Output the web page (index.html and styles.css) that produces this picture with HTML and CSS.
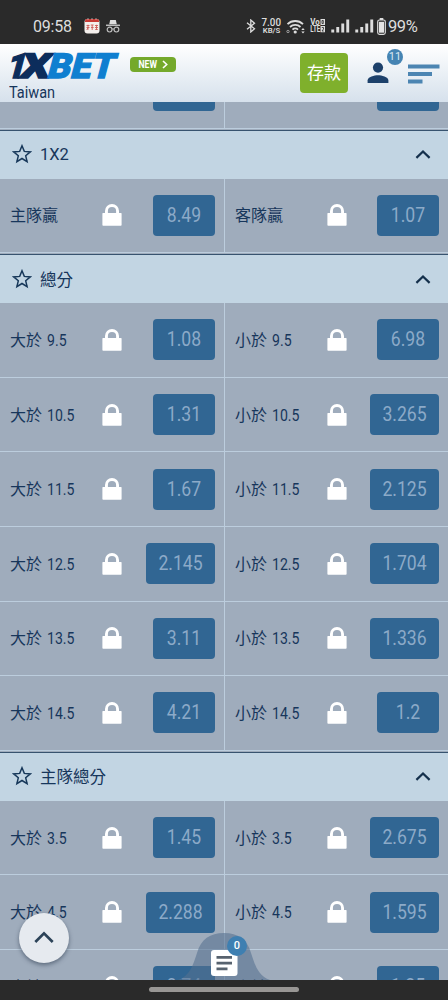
FILE: index.html
```html
<!DOCTYPE html>
<html lang="zh-Hant">
<head>
<meta charset="utf-8">
<title>1XBET</title>
<link rel="stylesheet" href="styles.css">
</head>
<body>
<svg class="defs" width="0" height="0">
  <symbol id="lock" viewBox="0 0 20 22"><path d="M3 9V7a7 7 0 0 1 14 0v2H19a.6.6 0 0 1 .6.6v11.400a.8.8 0 0 1-.8.8H1.200a.8.8 0 0 1-.8-.8V9.600A.6.6 0 0 1 1 9zM5.900 9h8.200V7a4.100 4.100 0 0 0-8.200 0z" fill="#fff" fill-rule="evenodd"/></symbol>
  <symbol id="star" viewBox="0 0 20 20"><path d="M10 1.800l2.300 5.600 6 .5-4.600 3.900 1.400 5.900-5.100-3.200-5.100 3.200 1.400-5.900-4.600-3.900 6-.5z" fill="none" stroke="#17385a" stroke-width="1.500"/></symbol>
  <symbol id="up" viewBox="0 0 16 10"><path d="M1.400 8.900L8 2.500l6.600 6.400" fill="none" stroke="#14304c" stroke-width="2.200"/></symbol>
  <symbol id="signal" viewBox="0 0 19 14"><path d="M.3 10.500h2.900v3H.300zM5.300 8h2.900v5.500H5.300zM10.300 4.500h2.900v9h-2.900zM15.300 .5h2.900v13h-2.900z" fill="#ddd"/></symbol>
</svg>
<div class="screen">
  <div class="status">
    <span class="clock">09:58</span>
    <svg class="cal" width="16" height="16" viewBox="0 0 16 16"><rect x=".5" y="1" width="15" height="14.500" rx="3" fill="#f4efec"/><path d="M1 4V3a2 2 0 0 1 2-2h10a2 2 0 0 1 2 2v1z" fill="#c83a34"/><path d="M4 0v2M8 0v2M12 0v2" stroke="#eee" stroke-width=".6"/><path d="M2.500 7.500h3M4 6.800v5M2.500 9.500h3M2.800 12l1-2M6.800 7h2.800M8.200 7v5M7 9.500h2.600M11 7.500h3M12.500 6.800v5M11 9.500h3M11.200 11.500h2.600" stroke="#cf5c58" stroke-width=".9"/></svg>
    <svg class="incog" width="14" height="14" viewBox="0 0 14 14" fill="none" stroke="#bbb"><path d="M3.200 5.200L4.200 1h5.600l1 4.200z" fill="#ddd" stroke="none"/><path d="M0 6.300h14" stroke-width="1.500"/><circle cx="3.600" cy="10.600" r="2.400" stroke-width="1.200"/><circle cx="10.400" cy="10.600" r="2.400" stroke-width="1.200"/><path d="M6 10.200q1-.8 2 0"/></svg>
    <svg class="bt" width="10" height="14" viewBox="0 0 10 14"><path d="M1 3.800l7.500 6L4.800 13V1l3.700 3.200-7.500 6" fill="none" stroke="#ddd" stroke-width="1.300"/></svg>
    <svg class="speed" width="21" height="18" viewBox="0 0 21 18" fill="#ddd"><text x=".5" y="8.700" font-size="10.500" font-weight="500" textLength="19.500" lengthAdjust="spacingAndGlyphs">7.00</text><text x="1.800" y="16.300" font-size="8" font-weight="600" textLength="17.500" lengthAdjust="spacingAndGlyphs">KB/S</text></svg>
    <svg class="wifi" width="20" height="15" viewBox="0 0 20 15"><g fill="none" stroke="#ddd" stroke-width="1.800"><path d="M1.500 5.200a11 11 0 0 1 15.500 0M4 8a7.400 7.400 0 0 1 10.500 0M6.500 10.600a4 4 0 0 1 5.500 0"/></g><circle cx="9.200" cy="13" r="1.600" fill="#ddd"/><circle cx="2" cy="12.500" r="1.200" fill="none" stroke="#aaa" stroke-width=".9"/><path d="M15.300 11l1.700-2 1.700 2zM15.300 12.500l1.700 2 1.700-2z" fill="#ddd"/></svg>
    <svg class="volte" width="16" height="16" viewBox="0 0 16 16" fill="#ddd" font-weight="700"><text x=".3" y="7.200" font-size="8.500" textLength="9.500" lengthAdjust="spacingAndGlyphs">Vo</text><text x=".3" y="14.200" font-size="8.500" textLength="10" lengthAdjust="spacingAndGlyphs">LTE</text><path d="M10.500 1h4.500v6h-4.500zM10.500 8h4.500v6.300h-4.500z"/><path d="M12 2.500h1.300v3H12zM11.800 9.500h1.700v1.500l-1.500 2h1.700" fill="none" stroke="#2a2a2a" stroke-width=".8"/></svg>
    <svg class="sig1" width="19" height="14"><use href="#signal"/></svg>
    <svg class="sig2" width="19" height="14"><use href="#signal"/></svg>
    <svg class="bat" width="9" height="17" viewBox="0 0 9 17"><path d="M2.700 0h3.600v2H2.700z" fill="#ddd"/><rect x=".7" y="2" width="7.600" height="14.300" rx="1.800" fill="none" stroke="#ddd" stroke-width="1.200"/><rect x="2" y="3.800" width="5" height="10.900" fill="#e4e4e4"/></svg>
    <span class="pct">99%</span>
  </div>
  <header class="top">
    <div class="brand">
      <svg class="logo" width="114" height="30" viewBox="0 0 114 30"><g font-family="Roboto, sans-serif" font-weight="900" font-size="34.500" transform="translate(0 26) skewX(-15)" stroke-width="1.300"><g fill="#0c2d5c" stroke="#0c2d5c"><text x="-3" y="0" textLength="19" lengthAdjust="spacingAndGlyphs">1</text><text x="10.500" y="0" textLength="29.500" lengthAdjust="spacingAndGlyphs">X</text></g><text x="38" y="0" textLength="66.500" lengthAdjust="spacingAndGlyphs" fill="#0f7fd0" stroke="#0f7fd0">BET</text></g></svg>
      <span class="country">Taiwan</span>
    </div>
    <div class="new"><span>NEW</span><svg width="6" height="9" viewBox="0 0 6 9"><path d="M1 1l3.700 3.500L1 8" fill="none" stroke="#fff" stroke-width="1.600"/></svg></div>
    <div class="deposit">存款</div>
    <div class="user"><svg width="22" height="22" viewBox="0 0 22 22" fill="#1d416b"><circle cx="11" cy="5.600" r="5.100"/><path d="M.6 21v-2.600c0-3.400 6.900-5.100 10.400-5.100s10.400 1.700 10.400 5.100V21z"/></svg><span class="count">11</span></div>
    <svg class="menu" width="32" height="20" viewBox="0 0 32 20" fill="#4c85b2"><path d="M0 .5h31.500v4H0zM0 8h24v4H0zM0 15.500h14.500v4H0z"/></svg>
  </header>
  <main class="view">
    <div class="odds" id="odds"></div>
    <div class="coupon">
      <svg width="92" height="47" viewBox="0 0 92 47"><path d="M0 47C12 43 15 32 19 20 23 6 32 0 46 0s23 6 27 20c4 12 7 23 19 27z" fill="#54708f" fill-opacity=".58"/><rect x="33" y="17" width="26.500" height="26" rx="3" fill="#fff"/><path d="M38.500 24.300H54M38.500 30.100H54M38.500 35.900h11" stroke="#57626e" stroke-width="2.800"/></svg>
      <span class="zero">0</span>
    </div>
    <div class="fab"><svg width="20" height="13" viewBox="0 0 20 13"><path d="M1.300 11L10 2.300l8.700 8.700" fill="none" stroke="#2c4358" stroke-width="2.700"/></svg></div>
  </main>
  <div class="nav"><div class="pill"></div></div>
</div>
<script src="odds.js"></script>
</body>
</html>
```

FILE: styles.css
```css
body { margin: 0; background: #2a2a2a; font-family: Roboto, "Noto Sans CJK TC", sans-serif; color: #17365b; }
.defs { position: absolute; }
.screen { width: 448px; height: 1000px; display: flex; flex-direction: column; overflow: hidden; }
svg { display: block; flex: none; }

.status { height: 44px; flex: none; background: #2a2a2a; color: #ddd; display: flex; align-items: center; padding-top: 8px; box-sizing: border-box; }
.clock { width: 39px; margin-left: 33px; font-size: 16px; letter-spacing: -.2px; }
.cal { margin-left: 12px; }
.incog { margin-left: 6px; }
.bt { margin-left: 126px; }
.speed { margin-left: 5px; }
.wifi { margin-left: 4px; }
.volte { margin-left: 4px; }
.sig1 { margin-left: 5px; }
.sig2 { margin-left: 5px; }
.bat { margin-left: 3px; }
.pct { margin-left: 2px; font-size: 16.500px; letter-spacing: -.4px; }

.top { height: 57.500px; flex: none; display: flex; align-items: flex-start; background: linear-gradient(#fff, #d6e1ec); box-sizing: border-box; position: relative; z-index: 1; }
.brand { width: 112px; margin: 8px 0 0 8px; }
.logo { overflow: visible; }
.country { display: block; font-size: 16.500px; line-height: 20px; margin: .5px 0 0 1px; transform: scaleX(.88); transform-origin: left; }
.new { width: 46px; height: 15px; margin: 12.500px 0 0 9.500px; border-radius: 4px; background: #74a92b; color: #fff; display: flex; align-items: center; justify-content: center; gap: 4px; font-size: 10px; font-weight: 700; }
.new span { transform: scaleX(.86); }
.deposit { width: 48px; height: 40px; margin: 9px 0 0 124.500px; border-radius: 4px; background: #7fb02c; color: #fff; font-size: 17px; line-height: 40px; text-align: center; }
.user { width: 22px; margin: 17.500px 0 0 19px; position: relative; }
.count { position: absolute; left: 20px; top: -12.500px; width: 16px; height: 16px; border-radius: 50%; background: #4584b3; color: #dbe9f4; font-size: 11px; line-height: 16px; text-align: center; }
.menu { margin: 19.500px 0 0 18.500px; }

.view { flex: 1; min-height: 0; overflow: hidden; position: relative; background: #9facbc; }
.odds { margin-top: -47.500px; }
.title { height: 50px; box-sizing: border-box; display: flex; align-items: center; padding: 1px 17px 0 12px; background: linear-gradient(#9facbc 1px, #37536f 1px, #37536f 2px, #c2d5e3 2px); font-size: 16.500px; }
.title span { margin-left: 8px; flex: 1; }
.row { height: 74.600px; box-sizing: border-box; display: grid; grid-template-columns: 225px 223px; border-bottom: 1px solid #bccddd; }
.cell { display: flex; align-items: center; padding: 0 9px 0 10px; font-size: 16px; }
.cell:first-child { border-right: 1px solid #bccddd; }
.cell:last-child .name { width: 91.500px; }
.name { width: 92px; white-space: nowrap; display: flex; align-items: baseline; gap: 4.500px; padding-bottom: 2px; }
.num { transform: scaleX(.88); transform-origin: left; }
.price { height: 41px; width: 62px; margin-left: auto; border-radius: 4px; background: #316693; color: #8caac8; font-size: 20px; line-height: 41px; text-align: center; }
.price.wide { width: 69px; }
.price span { display: block; transform: translateY(.4px) scaleX(.88); }

.fab { position: absolute; left: 18.500px; top: 811px; width: 50px; height: 50px; border-radius: 50%; background: #e6eaef; box-shadow: 0 2px 4px rgba(40,55,75,.55); display: flex; align-items: center; justify-content: center; }
.coupon { position: absolute; left: 178px; bottom: 0; }
.zero { position: absolute; left: 49px; top: 3px; width: 20px; height: 20px; border-radius: 50%; background: #3e7fb1; color: #fff; font-size: 11px; font-weight: 500; line-height: 20px; text-align: center; }
.nav { height: 20px; flex: none; background: #2a2a2a; }
.pill { width: 150px; height: 5px; margin: 6.500px auto 0; border-radius: 3px; background: #989694; }
```

FILE: odds.js
```javascript
const sections = [
  { rows: [["", "", "", "", "", ""]] },
  { title: "1X2", rows: [["主隊贏", "", "8.49", "客隊贏", "", "1.07"]] },
  { title: "總分", rows: [
    ["大於", "9.5", "1.08", "小於", "9.5", "6.98"],
    ["大於", "10.5", "1.31", "小於", "10.5", "3.265"],
    ["大於", "11.5", "1.67", "小於", "11.5", "2.125"],
    ["大於", "12.5", "2.145", "小於", "12.5", "1.704"],
    ["大於", "13.5", "3.11", "小於", "13.5", "1.336"],
    ["大於", "14.5", "4.21", "小於", "14.5", "1.2"]
  ] },
  { title: "主隊總分", rows: [
    ["大於", "3.5", "1.45", "小於", "3.5", "2.675"],
    ["大於", "4.5", "2.288", "小於", "4.5", "1.595"],
    ["大於", "5.5", "3.74", "小於", "5.5", "1.25"]
  ] }
];

const cell = (name, num, price) => `<div class="cell">
  <div class="name"><span>${name}</span>${num ? `<span class="num">${num}</span>` : ""}</div>
  <svg width="20" height="22"><use href="#lock"/></svg>
  <div class="price${price.length > 4 ? " wide" : ""}"><span>${price}</span></div>
</div>`;

const html = sections.map(s => {
  const title = s.title
    ? `<div class="title"><svg width="20" height="20"><use href="#star"/></svg><span>${s.title}</span><svg width="16" height="10"><use href="#up"/></svg></div>`
    : "";
  const rows = s.rows.map(r =>
    `<div class="row">${cell(r[0], r[1], r[2])}${cell(r[3], r[4], r[5])}</div>`).join("");
  return `<section>${title}${rows}</section>`;
}).join("");

document.getElementById("odds").innerHTML = html;
```
